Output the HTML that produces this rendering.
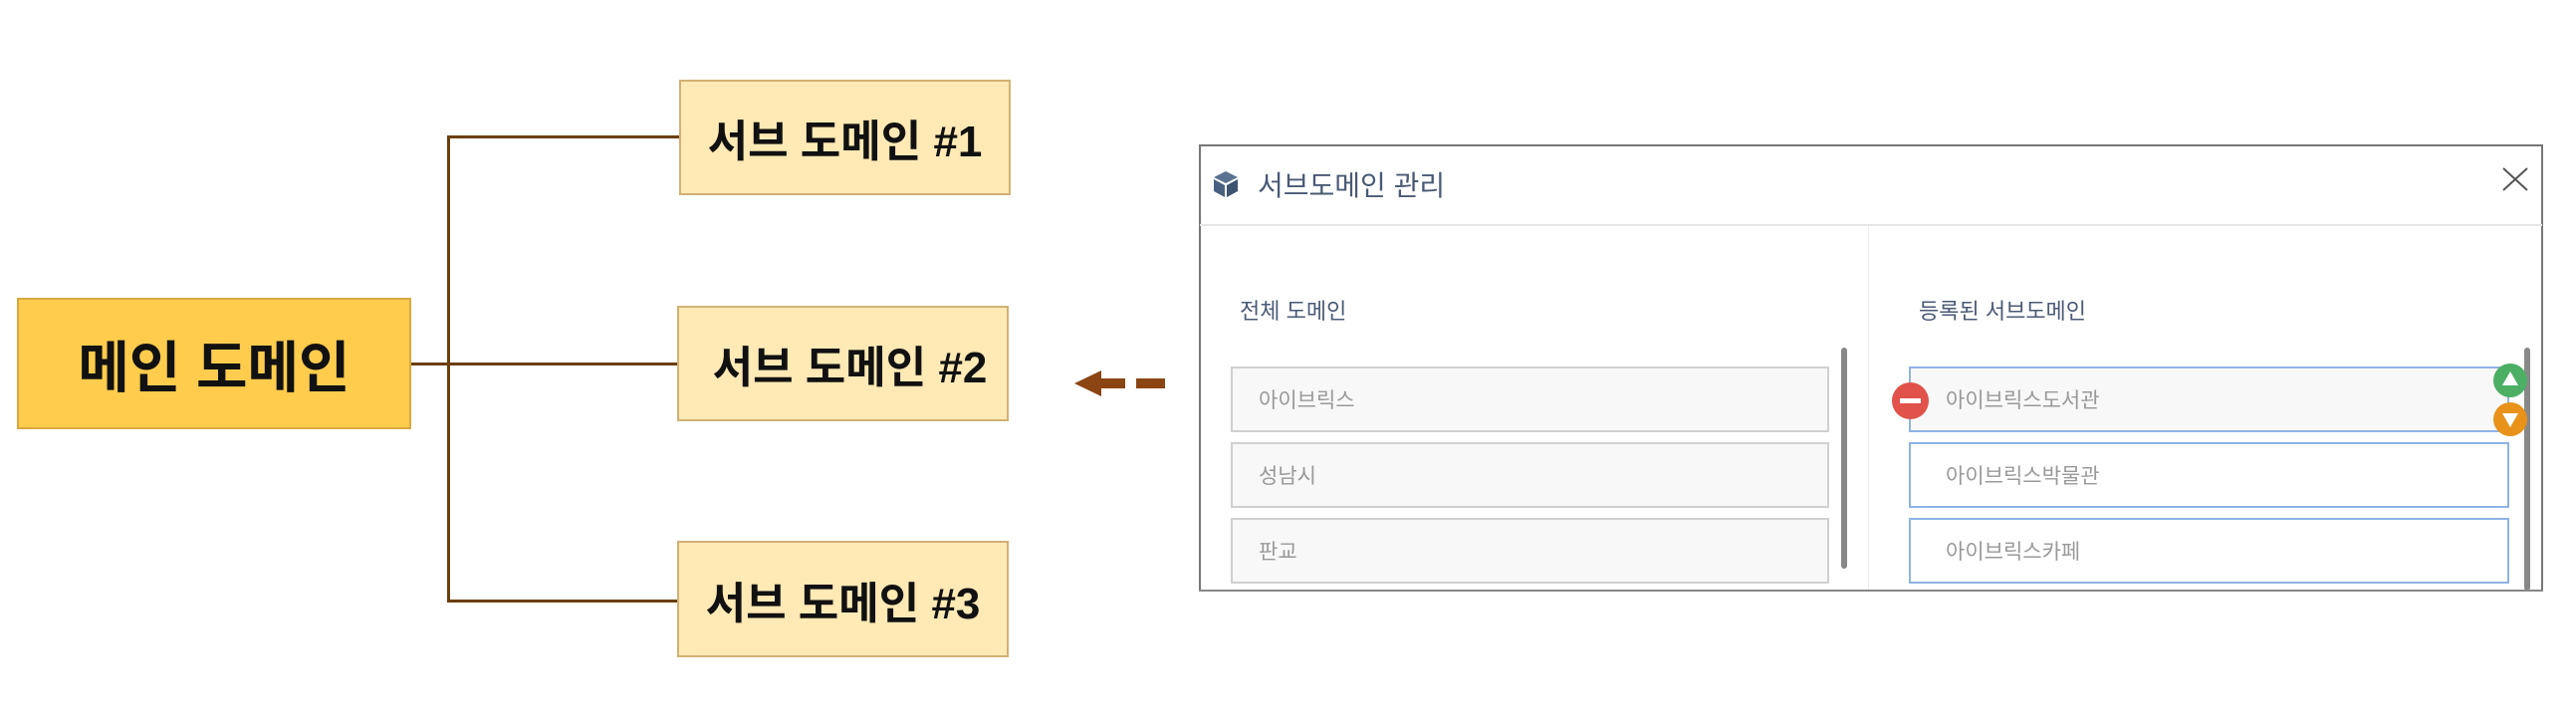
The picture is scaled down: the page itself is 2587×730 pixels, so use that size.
<!DOCTYPE html>
<html><head><meta charset="utf-8"><style>
*{margin:0;padding:0;box-sizing:border-box}
body{width:2587px;height:730px;background:#fff;position:relative;overflow:hidden;font-family:"Liberation Sans","Noto Sans CJK KR",sans-serif}
div{position:absolute}
.sub{background:#ffe9b5;border:2px solid #d2b074;display:flex;align-items:center;justify-content:center;font-weight:bold;font-size:44px;color:#111}
.ln{background:#6b3f0c}
.in{height:66px;background:#f8f8f8;border:2px solid #d0d0d0;font-size:21px;color:#999;display:flex;align-items:center;padding-left:26px}
.rin{border-color:#8fb3e6;padding-left:35px}
.h{font-size:22px;color:#4a5a75}
</style></head><body>
<div style="left:17px;top:299px;width:396px;height:132px;background:#ffcc4d;border:2px solid #d9a93e;display:flex;align-items:center;justify-content:center;font-weight:bold;font-size:56px;color:#111">메인 도메인</div>
<div class="sub" style="left:682px;top:80px;width:333px;height:116px">서브 도메인 #1</div>
<div class="sub" style="left:680px;top:307px;width:333px;height:116px;padding-left:14px">서브 도메인 #2</div>
<div class="sub" style="left:680px;top:543px;width:333px;height:117px">서브 도메인 #3</div>
<div class="ln" style="left:449px;top:136px;width:3px;height:468px"></div>
<div class="ln" style="left:449px;top:136px;width:233px;height:3px"></div>
<div class="ln" style="left:413px;top:364px;width:267px;height:3px"></div>
<div class="ln" style="left:449px;top:602px;width:231px;height:3px"></div>
<svg style="position:absolute;left:1076px;top:370px" width="100" height="32"><polygon points="3,15 30,2 30,28" fill="#8b4513"/><rect x="28" y="10" width="26" height="10" fill="#8b4513"/><rect x="65" y="10" width="29" height="10" fill="#8b4513"/></svg>

<div style="left:1204px;top:145px;width:1350px;height:449px;border:2px solid #777;border-bottom:none;background:#fff"></div>
<div style="left:1204px;top:592px;width:1350px;height:2px;background:#888"></div>
<div style="left:1205px;top:225px;width:1348px;height:2px;background:#e6e6e6"></div>
<div style="left:1876px;top:227px;width:1px;height:365px;background:#eee"></div>
<svg style="position:absolute;left:1216px;top:170px" width="30" height="30" viewBox="0 0 30 30"><polygon points="15,2 27,8 15,14 3,8" fill="#5b7290"/><polygon points="3,10 14,16 14,28 3,22" fill="#4a6080"/><polygon points="16,16 27,10 27,22 16,28" fill="#3d5370"/></svg>
<div style="left:1263px;top:165px;font-size:28px;color:#4a5a75">서브도메인 관리</div>
<svg style="position:absolute;left:2512px;top:168px" width="28" height="24"><path d="M2 1 L26 23 M26 1 L2 23" stroke="#555" stroke-width="2"/></svg>
<div class="h" style="left:1245px;top:295px">전체 도메인</div>
<div class="h" style="left:1927px;top:295px">등록된 서브도메인</div>
<div class="in" style="left:1236px;top:368px;width:601px">아이브릭스</div>
<div class="in" style="left:1236px;top:444px;width:601px">성남시</div>
<div class="in" style="left:1236px;top:520px;width:601px">판교</div>
<div style="left:1849px;top:349px;width:6px;height:222px;background:#888;border-radius:3px"></div>
<div class="in rin" style="left:1917px;top:368px;width:603px">아이브릭스도서관</div>
<div class="in rin" style="left:1917px;top:444px;width:603px;background:#fff">아이브릭스박물관</div>
<div class="in rin" style="left:1917px;top:520px;width:603px;background:#fff">아이브릭스카페</div>
<div style="left:2535px;top:349px;width:6px;height:244px;background:#888;border-radius:3px"></div>
<div style="left:1900px;top:384px;width:37px;height:37px;border-radius:50%;background:#e0524a"></div>
<div style="left:1908px;top:400px;width:21px;height:5px;background:#fff"></div>
<svg style="position:absolute;left:2503px;top:364px" width="36" height="76"><circle cx="18" cy="18" r="17" fill="#4caf64"/><polygon points="18,9 26,23 10,23" fill="#fff"/><circle cx="18" cy="57" r="17" fill="#e8921a"/><polygon points="10,51 26,51 18,65" fill="#fff"/></svg>
</body></html>
